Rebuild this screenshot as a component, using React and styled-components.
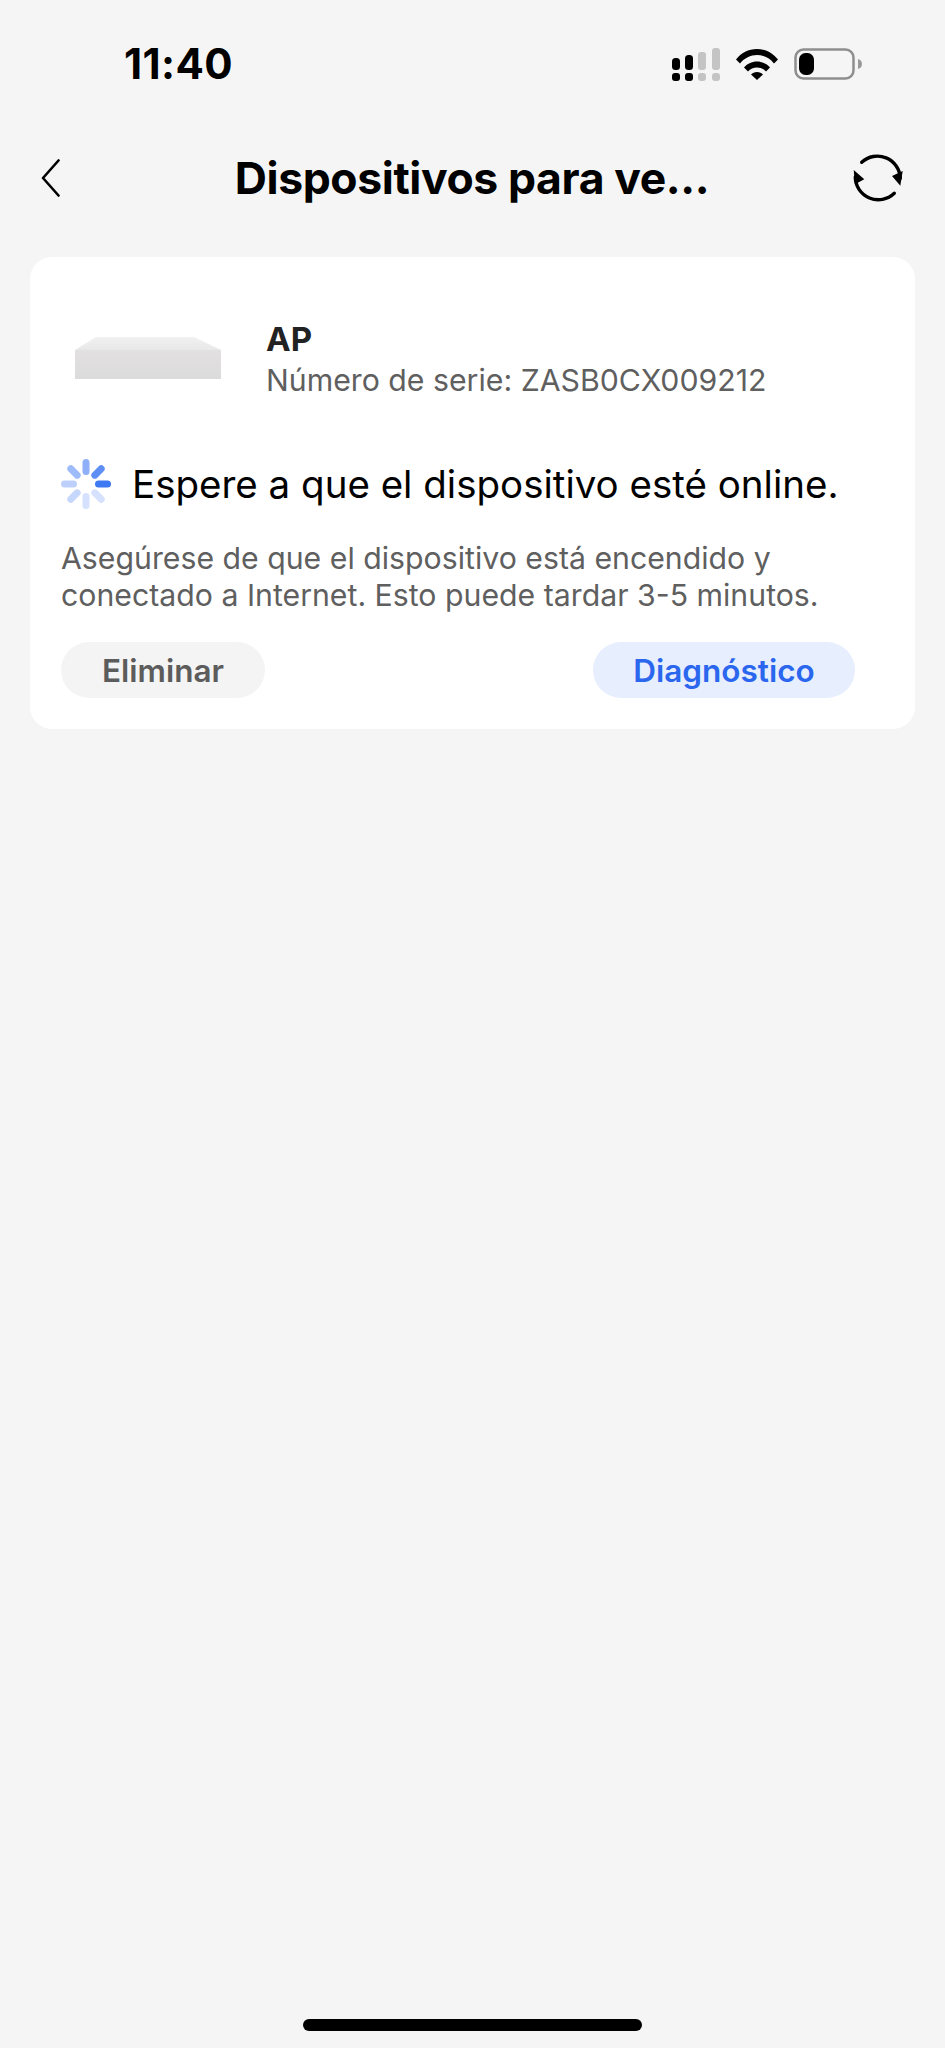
import React from "react";
import styled, { createGlobalStyle } from "styled-components";

const Global = createGlobalStyle`
  html, body { margin: 0; padding: 0; background: #f5f5f5; }
  * { box-sizing: border-box; }
`;

const Page = styled.div`
  width: 945px;
  height: 2048px;
  background: #f5f5f5;
  display: flex;
  flex-direction: column;
  font-family: Inter, "Liberation Sans", sans-serif;
  overflow: hidden;
`;

const StatusBar = styled.div`
  height: 64px;
  margin-top: 32px;
  padding: 0 83px 0 124px;
  display: flex;
  align-items: center;
  justify-content: space-between;
`;

const Time = styled.div`
  font-size: 42px;
  font-weight: 700;
  letter-spacing: 0.4px;
  color: #000;
  line-height: 1;
`;

const StatusIcons = styled.div`
  display: flex;
  align-items: center;
  gap: 16px;
`;

const NavBar = styled.div`
  margin-top: 40px;
  height: 84px;
  padding: 0 42px 0 41px;
  display: grid;
  grid-template-columns: 1fr auto 1fr;
  align-items: center;
`;

const NavEnd = styled.div`
  display: flex;
  justify-content: ${(p) => (p.$right ? "flex-end" : "flex-start")};
`;

const Title = styled.h1`
  margin: 0;
  font-size: 44.5px;
  font-weight: 700;
  letter-spacing: -0.4px;
  color: #000;
`;

const Card = styled.section`
  margin: 37px 30px 0 30px;
  height: 472px;
  padding: 0 31px;
  background: #fff;
  border-radius: 22px;
  display: flex;
  flex-direction: column;
`;

const DeviceRow = styled.div`
  margin-top: 62px;
  display: flex;
  align-items: center;
  gap: 45px;
  padding-left: 14px;
`;

const DeviceThumb = styled.div`
  display: flex;
  margin-bottom: 3px;
`;

const DeviceInfo = styled.div`
  display: flex;
  flex-direction: column;
`;

const DeviceName = styled.div`
  font-size: 33px;
  font-weight: 700;
  line-height: 41px;
  color: #222;
`;

const Serial = styled.div`
  font-size: 30.25px;
  line-height: 40px;
  color: #5f5f5f;
`;

const StatusRow = styled.div`
  margin-top: 59px;
  display: flex;
  align-items: center;
  gap: 21px;
`;

const StatusText = styled.div`
  font-size: 38.5px;
  line-height: 50px;
  color: #000;
`;

const Description = styled.p`
  margin: 31px 0 0;
  font-size: 30.25px;
  line-height: 37px;
  color: #5f5f5f;
`;

const Actions = styled.div`
  margin-top: 28px;
  padding-right: 29px;
  display: flex;
  justify-content: space-between;
`;

const Pill = styled.button`
  height: 56px;
  width: ${(p) => p.$width}px;
  border: 0;
  border-radius: 28px;
  padding: 0;
  font-family: inherit;
  font-size: 31.5px;
  font-weight: 600;
  background: ${(p) => (p.$primary ? "#e7eefe" : "#f4f4f4")};
  color: ${(p) => (p.$primary ? "#2b66ee" : "#5c5c5c")};
`;

const HomeIndicator = styled.div`
  margin: auto auto 17px;
  width: 339px;
  height: 12px;
  border-radius: 6px;
  background: #000;
  flex: none;
`;

const Signal = () => (
  <svg width="48" height="33" viewBox="0 0 48 33">
    <rect x="0" y="10" width="8" height="12" rx="3.5" fill="#000" />
    <rect x="0" y="25" width="8" height="8" rx="3" fill="#000" />
    <rect x="13" y="7" width="8" height="15" rx="3.5" fill="#000" />
    <rect x="13" y="25" width="8" height="8" rx="3" fill="#000" />
    <rect x="26" y="4" width="8" height="18" rx="3" fill="#c4c4c4" />
    <rect x="26" y="25" width="8" height="8" rx="3" fill="#c4c4c4" />
    <rect x="40" y="0" width="8" height="22" rx="3" fill="#c4c4c4" />
    <rect x="40" y="25" width="8" height="8" rx="3" fill="#c4c4c4" />
  </svg>
);

const Wifi = () => (
  <svg width="42" height="31" viewBox="0 0 42 31">
    <path d="M0 10.5C5 4 12.5 0 21 0s16 4 21 10.5l-4 4C33.5 9 27.5 6 21 6S8.500 9 4 14.500Z" fill="#000" />
    <path d="M8 18.500C11 15 15.700 12.500 21 12.500s10 2.500 13 6l-4 4C27.700 20 24.500 18.500 21 18.500S14.300 20 12 22.500Z" fill="#000" />
    <path d="M15 25.500C16.500 24 18.500 23 21 23s4.500 1 6 2.500L21 31Z" fill="#000" />
  </svg>
);

const Battery = () => (
  <svg width="68" height="32" viewBox="0 0 68 32">
    <rect x="1.500" y="1.500" width="58" height="29" rx="8" fill="none" stroke="#8e8e8e" strokeWidth="2.500" />
    <rect x="5" y="5" width="15" height="22" rx="6.500" fill="#000" />
    <path d="M64 11c2.500.8 4 2.500 4 5s-1.500 4.200-4 5Z" fill="#999" />
  </svg>
);

const BackIcon = () => (
  <svg width="19" height="38" viewBox="0 0 19 38">
    <path d="M17.500 1.500 2 19l15.500 17.500" fill="none" stroke="#000" strokeWidth="2.600" strokeLinecap="round" strokeLinejoin="round" />
  </svg>
);

const RefreshIcon = () => (
  <svg width="50" height="50" viewBox="0 0 50 50">
    <path d="M8.700 9.300A23 23 0 0 1 47.300 25.300" fill="none" stroke="#000" strokeWidth="3.400" strokeLinecap="round" />
    <path d="M41.300 40.300A23 23 0 0 1 2.300 24" fill="none" stroke="#000" strokeWidth="3.400" strokeLinecap="round" />
    <path d="M39 23 49.700 18 47.300 32.700Z" fill="#000" strokeLinejoin="round" />
    <path d="M0.700 17 11.300 26.300 2 31.300Z" fill="#000" strokeLinejoin="round" />
  </svg>
);

const DeviceImage = () => (
  <svg width="146" height="42" viewBox="0 0 146 42">
    <defs>
      <linearGradient id="devTop" x1="0" y1="0" x2="0" y2="1">
        <stop offset="0" stopColor="#f2f1f1" />
        <stop offset="1" stopColor="#e9e8e8" />
      </linearGradient>
      <linearGradient id="devFront" x1="0" y1="0" x2="0" y2="1">
        <stop offset="0" stopColor="#e2e0e0" />
        <stop offset="1" stopColor="#dcdbdb" />
      </linearGradient>
    </defs>
    <path d="M21 0H119L146 13H0Z" fill="url(#devTop)" />
    <rect x="0" y="13" width="146" height="29" fill="url(#devFront)" />
  </svg>
);

const SPOKES = [
  { angle: 0, color: "#bcd0fb" },
  { angle: 45, color: "#9ebbfa" },
  { angle: 90, color: "#8fb0f9" },
  { angle: 135, color: "#5f8ff5" },
  { angle: 180, color: "#3f79f2" },
  { angle: 225, color: "#d5e1fd" },
  { angle: 270, color: "#d5e1fd" },
  { angle: 315, color: "#c6d7fc" },
];

const Spinner = () => (
  <svg width="50" height="50" viewBox="0 0 50 50">
    {SPOKES.map((s) => (
      <rect
        key={s.angle}
        x="0"
        y="21.500"
        width="16"
        height="7"
        rx="3.500"
        fill={s.color}
        transform={`rotate(${s.angle} 25 25)`}
      />
    ))}
  </svg>
);

export default function App() {
  return (
    <Page>
      <Global />
      <StatusBar>
        <Time>11:40</Time>
        <StatusIcons>
          <Signal />
          <Wifi />
          <Battery />
        </StatusIcons>
      </StatusBar>
      <NavBar>
        <NavEnd>
          <BackIcon />
        </NavEnd>
        <Title>Dispositivos para ve...</Title>
        <NavEnd $right>
          <RefreshIcon />
        </NavEnd>
      </NavBar>
      <Card>
        <DeviceRow>
          <DeviceThumb>
            <DeviceImage />
          </DeviceThumb>
          <DeviceInfo>
            <DeviceName>AP</DeviceName>
            <Serial>Número de serie: ZASB0CX009212</Serial>
          </DeviceInfo>
        </DeviceRow>
        <StatusRow>
          <Spinner />
          <StatusText>Espere a que el dispositivo esté online.</StatusText>
        </StatusRow>
        <Description>
          Asegúrese de que el dispositivo está encendido y
          <br />
          conectado a Internet. Esto puede tardar 3-5 minutos.
        </Description>
        <Actions>
          <Pill $width={204}>Eliminar</Pill>
          <Pill $primary $width={262}>Diagnóstico</Pill>
        </Actions>
      </Card>
      <HomeIndicator />
    </Page>
  );
}
